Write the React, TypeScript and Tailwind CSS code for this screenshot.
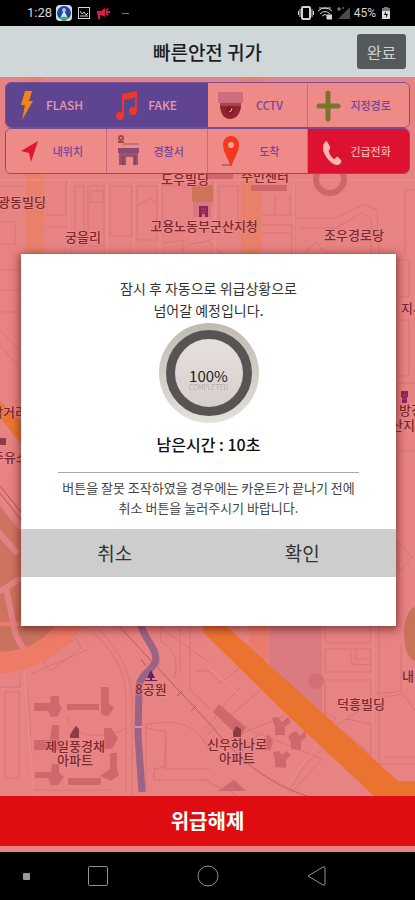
import type { ReactNode } from "react";

const FONT = "font-['Noto_Sans_CJK_KR','Noto_Sans',sans-serif]";

type Label = { x: number; y: number; text: string };

const labels: Label[] = [
  { x: 22, y: 207, text: "광동빌딩" },
  { x: 185, y: 184, text: "도우빌딩" },
  { x: 265, y: 181, text: "주민센터" },
  { x: 204, y: 231, text: "고용노동부군산지청" },
  { x: 83, y: 242, text: "궁을리" },
  { x: 354, y: 240, text: "조우경로당" },
  { x: 9, y: 417, text: "삼거리" },
  { x: 10, y: 462, text: "주유소" },
  { x: 413, y: 313, text: "지사" },
  { x: 411, y: 415, text: "방경" },
  { x: 409, y: 430, text: "산지청" },
  { x: 151, y: 694, text: "8공원" },
  { x: 75, y: 751, text: "제일풍경채" },
  { x: 75, y: 765, text: "아파트" },
  { x: 237, y: 749, text: "신우하나로" },
  { x: 237, y: 763, text: "아파트" },
  { x: 361, y: 709, text: "덕흥빌딩" },
  { x: 414, y: 681, text: "내흥" },
];

function MapCanvas() {
  return (
    <svg
      className="absolute inset-0 h-full w-full"
      viewBox="0 77 415 775"
      preserveAspectRatio="xMidYMid slice"
      aria-hidden="true"
    >
      <rect x="-400" y="77" width="1200" height="775" fill="#e78382" />
      {/* wide pale roads */}
      <path d="M26 77H44V254H26zM241 77H261V254H241z" fill="#e8806a" />
      <rect x="249" y="620" width="19" height="42" fill="#ea7c6b" />
      <path d="M269 626H322V737L269 684z" fill="#d97b80" />
      {/* block outlines */}
      <g fill="none" stroke="#d67477" strokeWidth="1">
        <path d="M-2 186H24M-2 222H15V244H-2M46 215H66V180M46 227H70V254M75 186H84V246H75zM91 191H103V202H91zM88 186H104V246H88zM110 186H132V236H110zM137 186H157V240H137zM137 206L150 198L157 204" />
        <path d="M162 186H190V180M162 186V228M213 180V205M219 186H238V228H219zM163 243L183 240V254M190 244L208 241L222 254" />
        <path d="M262 215H292M262 225H292V254M275 196V215M290 196V215M295 186V254M262 233H290M298 218H335L365 204L377 210L379 254M300 228H336L362 213L371 219V254M305 254L315 242L327 254M405 190H415M405 190V254" />
        <path d="M0 270H21M0 290H21M0 312H21M0 330L21 352M0 345L21 370M398 260H409V297H398M398 320H409V376H398M397 383H415M397 451H415M398 542L412 557L399 572z" />
        <path d="M43 662L76 638L81 648L51 671zM0 687H20V674M5 692H19V778H5zM31 674L87 650M85 627C108 642 126 668 126 700V792M96 627C118 646 132 674 132 700V796M27 690C31 720 31 760 34 796M34 790H110M68 715C65 737 105 741 126 728" />
        <path d="M160 627L161 642C177 648 178 667 174 678M180 627V673M190 627V690L210 709M195 671H210M210 663L160 627M210 780H154V769L164 767L166 732L146 728V724L170 722C191 724 202 735 210 751M166 737V769H210M146 724V792" />
        <path d="M205 667L221 683L239 668M214 719L220 708L258 735L242 751M205 728L216 718M221 708L240 688M209 747L284 716M258 733L322 759L290 794M288 794L304 765L328 745M205 780L224 790M236 796L226 786M268 684L205 737M249 660V677" />
        <path d="M325 626V643H371V626M325 649H371V672H325zM351 650V664L371 665M356 650V659H371M325 680H371V703L325 733zM325 685V713L336 718L325 728M347 719L371 724V762M343 730L371 755M379 626V764H415M376 693H386L401 691V644M379 698L403 694L415 711M384 757H415" />
      </g>
      <path d="M0 486L21 512M0 493L21 520" fill="none" stroke="#b0575d" strokeWidth="1" />
      <path
        d="M0 180H415M69 180V254M107 180V254M134 180V254M160 180V254M215 180V254M294 180V254M24 668L34 796M373 626V764M205 665L240 695M320 742L282 792"
        fill="none"
        stroke="#ea8989"
        strokeWidth="2"
      />
      {/* round junction and parks on the left edge */}
      <path d="M0 506L21 532V640H0z" fill="#cd7460" />
      <path d="M0 622H84C65 656 32 671 0 674z" fill="#ee7b65" />
      <path d="M0 626H55C40 644 20 651 0 652z" fill="#c97260" />
      <path
        d="M-2 532L18 554M21 578L6 588L-2 592M6 588L16 636L24 650"
        fill="none"
        stroke="#e58384"
        strokeWidth="6"
      />
      {/* orange trunk roads */}
      <path d="M0 401L24 424V447L0 418z" fill="#ea7530" />
      <path d="M203 622H222L398 781H415V796H374L283 711L203 632z" fill="#ea742f" />
      <ellipse cx="416" cy="634" rx="12" ry="27" fill="#c87359" />
      {/* stream */}
      <path
        d="M141 624C144 640 156 646 156 660C155 669 139 674 139 688L138 735L142 792"
        fill="none"
        stroke="#9b6385"
        strokeWidth="7"
      />
      <path d="M135 727H142" stroke="#eb8a8b" strokeWidth="2" />
      {/* railway */}
      <path d="M117 624L210 724C236 757 267 784 310 797" fill="none" stroke="#b85e62" strokeWidth="1" />
      <path d="M141 659L146 666M177 696L182 691M191 711L196 706" stroke="#a9585a" strokeWidth="1" />
      {/* buildings */}
      <g fill="#cf686c">
        <path d="M34 703H50L51 696H59V704L62 708L58 716L51 717L48 711H34zM67 704H99V710H67zM101 687H109V704L114 708L108 716L101 714zM34 740H50L52 725H59V750H34zM35 772H51L52 764H59V772L64 777L58 785L51 785L48 778H35zM68 778H101V785H68zM104 728H111L118 738L112 749H104zM110 753H117V770L119 775L111 781L100 776L110 769z" />
        <path d="M219 704L246 728L239 737L213 712zM272 718L278 717L282 722L288 717L291 722L285 727V735H275V727zM290 734L296 731L300 736L305 731L306 737L301 742V750L291 749V742L288 738zM273 752L279 751L282 755L287 751L291 755L286 760V768L275 767V761zM268 734L273 742L270 751L263 747zM234 780L246 791H218z" />
      </g>
      <circle cx="316" cy="681" r="8" fill="#d06f76" />
      <rect x="192" y="185" width="21" height="17" fill="#cd7358" />
      <rect x="193" y="202" width="18" height="15" fill="#d97681" />
      <g fill="none" stroke="#cf6669" strokeWidth="6">
        <circle cx="330" cy="179" r="14" />
        <path d="M251 188H287M207 176H233" />
      </g>
      {/* place symbols */}
      <g fill="#8c2554">
        <path d="M199 206H208V217H205V214H202V217H199z" />
        <path d="M401 391H408V397H407V403H402V397H401z" />
      </g>
      <path d="M201 209H206M201 212H206M402 395H407M402 399H407" stroke="#b04a6a" />
      <path d="M147 678L151 670L155 678H152V680H157V681H145V680H150V678z" fill="#652163" />
      <path d="M70 735L73 730L76 726L79 729V738H70zM233 732L236 726L241 729V737H233zM0 438H6V445H0z" fill="#903a41" />
      <g
        className={FONT}
        fill="#7b2831"
        fontSize="13"
        fontWeight="500"
        textAnchor="middle"
        stroke="#ed9290"
        strokeWidth="2"
        strokeOpacity="0.5"
        paintOrder="stroke"
      >
        {labels.map((l, i) => (
          <text key={i} x={l.x} y={l.y}>
            {l.text}
          </text>
        ))}
      </g>
    </svg>
  );
}

const icons: Record<string, ReactNode> = {
  bolt: (
    <svg viewBox="0 0 28 36" className="h-9 w-7">
      <path d="M11 4H18L15 14H19L8 33L11 18H7z" fill="#ef8512" />
    </svg>
  ),
  note: (
    <svg viewBox="0 0 28 36" className="h-9 w-7">
      <path d="M7 7L22 4V10L9 13V29H7zM20 5H22V25H20z" fill="#e83a2c" />
      <ellipse cx="5" cy="29" rx="4" ry="4" fill="#e83a2c" />
      <ellipse cx="18" cy="24" rx="4" ry="4" fill="#e83a2c" />
    </svg>
  ),
  cctv: (
    <svg viewBox="0 0 28 36" className="h-9 w-7">
      <path d="M2 5H27V16H2z" fill="#cc6e7e" />
      <path d="M4 16H25V20C24 27 20 32 14 32S5 27 4 20z" fill="#91252f" />
      <path d="M4 16H25V19H4z" fill="#b2404c" />
      <circle cx="14" cy="23" r="4" fill="#7c1c27" />
      <path d="M13 25Q16 25 16 21" stroke="#ecb0a8" fill="none" />
    </svg>
  ),
  plus: (
    <svg viewBox="0 0 28 36" className="h-9 w-7">
      <path d="M12 6V32M3 19H22" stroke="#7a752c" strokeWidth="5" strokeLinecap="round" />
    </svg>
  ),
  arrow: (
    <svg viewBox="0 0 28 36" className="h-9 w-7">
      <path d="M24 8L17 29L15 20L7 18z" fill="#dd1730" />
    </svg>
  ),
  police: (
    <svg viewBox="0 0 28 36" className="h-9 w-7">
      <circle cx="6" cy="5" r="2" fill="none" stroke="#9b4b45" strokeWidth="2" />
      <path d="M3 9H9" stroke="#9b4b45" strokeWidth="2" />
      <path d="M8 11H24" stroke="#c2727a" strokeWidth="2" />
      <path d="M3 15H24V20H3z" fill="#8c4a73" />
      <path d="M4 20H23V32H18V24H11V32H4z" fill="#9a5169" />
      <path d="M8 23V32M20 23V32" stroke="#7f496f" strokeWidth="2" />
    </svg>
  ),
  pin: (
    <svg viewBox="0 0 28 36" className="h-9 w-7">
      <path d="M6 32H15" stroke="#c1626b" strokeWidth="2" />
      <path
        d="M15 3C10 3 7 7 7 12C7 19 12 25 15 34C18 25 23 19 23 12C23 7 20 3 15 3z"
        fill="#f2391b"
      />
      <circle cx="15" cy="12" r="3" fill="#efa39b" />
    </svg>
  ),
  phone: (
    <svg viewBox="0 0 28 36" className="h-9 w-7">
      <path
        d="M9 9C10 8 11 8 12 10L14 14C15 16 12 17 13 19C14 22 16 25 18 26C20 26 20 23 22 24L25 27C26 28 25 31 22 32C16 33 7 22 7 15C7 12 8 10 9 9z"
        fill="#f7b8b2"
      />
    </svg>
  ),
};

function Tool({ icon, label, tone }: { icon: string; label: string; tone: "on" | "off" | "alert" }) {
  const tones = {
    on: "border-[#5f4491] bg-[#5f4491] pr-7 text-xs text-[#e69aa8]",
    off: "border-[#c76c80] bg-[#ee8b89] pr-4 text-[11px] text-[#75459a]",
    alert: "border-[#dc1230] bg-[#dc1230] pr-4 text-[11px] text-[#f5b3b0]",
  };
  return (
    <button type="button" className={`flex items-center border-r pl-2 last:border-r-0 ${tones[tone]}`}>
      <span className="w-8 shrink-0">{icons[icon]}</span>
      <span className="flex-1 text-center leading-4 font-medium whitespace-nowrap">{label}</span>
    </button>
  );
}

function StatusBar() {
  return (
    <div className="flex h-[26px] shrink-0 items-center justify-between bg-black pr-6 pl-[27px] text-[#d5d5d5]">
      <div className="flex items-center gap-1">
        <span className="font-[Roboto,sans-serif] text-[13px] leading-4">1:28</span>
        <svg viewBox="0 0 16 16" className="size-4">
          <rect width="16" height="16" rx="4" fill="#d8e1ee" />
          <circle cx="8" cy="8" r="7" fill="#2444a2" />
          <path d="M4 14L8 5L12 14z" fill="#d6eaf2" />
          <circle cx="8" cy="5" r="2" fill="#a8c3e8" />
          <path d="M4 13Q8 10 12 13L10 16H6z" fill="#45a866" />
        </svg>
        <svg viewBox="0 0 14 14" className="ml-px size-[14px]" fill="none" stroke="currentColor">
          <rect x="1.500" y="1.500" width="11" height="11" />
          <path d="M3 5L5 8L7 6L9 9L11 7M3 10H11" />
        </svg>
        <svg viewBox="0 0 14 14" className="ml-px size-[14px]" fill="#d91d47">
          <path d="M1 5L5 5L9 2V11L5 9H4V13H2V9L1 8zM10 3L13 2L11 5H14V7H11L13 10L10 9z" />
        </svg>
        <span className="ml-2 h-px w-[7px] bg-[#777]" />
      </div>
      <div className="flex items-center gap-1">
        <svg viewBox="0 0 16 14" className="h-[14px] w-4" fill="none" stroke="currentColor">
          <rect x="4" y="1" width="8" height="12" rx="1" strokeWidth="2" />
          <path d="M2 3V11M14 3V11M0.500 5V9M15.500 5V9" />
        </svg>
        <svg viewBox="0 0 14 14" className="size-[14px]" fill="none" stroke="currentColor">
          <path d="M0 5Q7 -1 14 5M2 8Q7 3 12 8M4 10Q7 7 10 10M1 2H13" />
          <path d="M9 9H14V13H9z" fill="currentColor" />
        </svg>
        <svg viewBox="0 0 14 14" className="size-[14px]">
          <path d="M14 1V13H2z" fill="#4b4b4b" />
          <path d="M1 3H5M3 1V5M6 2H8" stroke="#999" />
        </svg>
        <span className="font-[Roboto,sans-serif] text-xs leading-4">45%</span>
        <svg viewBox="0 0 10 14" className="ml-px h-[14px] w-[10px]">
          <path d="M3 1H7V2H9V13H1V2H3z" fill="#777" />
          <path d="M1 5H9V13H1z" fill="#ddd" />
          <path d="M5 5L3 9H5V12L7 8H5z" fill="#111" />
        </svg>
      </div>
    </div>
  );
}

function CountdownDialog() {
  return (
    <section
      role="dialog"
      aria-label="위급상황"
      className="mr-[19px] ml-[21px] flex flex-col bg-white pt-[23px] pb-[49px] text-center text-[#333] shadow-[0_2px_8px_2px_rgba(90,20,20,0.6)]"
    >
      <p className="text-[14px] leading-[22px]">
        잠시 후 자동으로 위급상황으로
        <br />
        넘어갈 예정입니다.
      </p>
      <div className="mx-auto mt-[2px] flex size-[100px] rounded-full bg-linear-to-b from-[#bfbbb0] to-[#e4e0da] p-[7px]">
        <div className="flex flex-1 flex-col items-center justify-center rounded-full border-[9px] border-[#595452] bg-linear-to-b from-[#e5dfde] to-[#d7cfcc] pt-[11px]">
          <span className="text-[15px] leading-4 text-[#222]">100%</span>
          <span className="text-[7px] leading-[6px] font-light text-[#a09a97]">COMPLETED</span>
        </div>
      </div>
      <p className="mt-[9px] text-[16px] leading-6 font-medium text-[#111]">남은시간 : 10초</p>
      <hr className="mx-[37px] mt-4 border-[#aaa]" />
      <p className="mt-[5px] text-[13px] leading-5 text-[#444]">
        버튼을 잘못 조작하였을 경우에는 카운트가 끝나기 전에
        <br />
        취소 버튼을 눌러주시기 바랍니다.
      </p>
      <div className="mt-[11px] grid h-12 grid-cols-2 bg-[#cdcdcd] text-[19px] text-[#333]">
        <button type="button">취소</button>
        <button type="button">확인</button>
      </div>
    </section>
  );
}

export default function App() {
  return (
    <div className={`flex min-h-screen flex-col ${FONT}`}>
      <StatusBar />
      <header className="grid h-[51px] shrink-0 grid-cols-[1fr_auto_1fr] items-center bg-[#d0d7d9] px-[9px]">
        <h1 className="col-start-2 text-[19px] leading-7 font-medium text-[#1b1d1e]">
          빠른안전 귀가
        </h1>
        <button
          type="button"
          className="h-[35px] w-[49px] justify-self-end rounded-[3px] bg-[#54595b] text-[16px] leading-6 text-[#cbd0d1]"
        >
          완료
        </button>
      </header>
      <main className="relative isolate flex flex-1 flex-col overflow-hidden">
        <MapCanvas />
        <div className="relative flex flex-1 flex-col">
          <nav className="mx-[5px] mt-[5px] flex flex-col">
            <div className="grid h-[46px] grid-cols-4 overflow-hidden rounded-md border border-[#74509c]">
              <Tool icon="bolt" label="FLASH" tone="on" />
              <Tool icon="note" label="FAKE" tone="on" />
              <Tool icon="cctv" label="CCTV" tone="off" />
              <Tool icon="plus" label="지정경로" tone="off" />
            </div>
            <div className="grid h-[46px] grid-cols-4 overflow-hidden rounded-md border border-[#74509c]">
              <Tool icon="arrow" label="내위치" tone="off" />
              <Tool icon="police" label="경찰서" tone="off" />
              <Tool icon="pin" label="도착" tone="off" />
              <Tool icon="phone" label="긴급전화" tone="alert" />
            </div>
          </nav>
          <div className="mt-20 mb-auto">
            <CountdownDialog />
          </div>
          <button
            type="button"
            className="mb-[6px] h-[50px] bg-[#df0d12] text-[20px] leading-7 font-bold text-white"
          >
            위급해제
          </button>
        </div>
      </main>
      <footer className="flex h-12 shrink-0 items-center bg-black pl-[23px] text-[#929292]">
        <span className="size-[7px] rounded-[1px] bg-[#999]" />
        <div className="flex flex-1 items-center justify-between pr-[87px] pl-[57px]">
          <button type="button" aria-label="최근 앱">
            <svg viewBox="0 0 22 22" className="size-[22px]" fill="none" stroke="currentColor">
              <rect x="1.500" y="1.500" width="19" height="19" rx="1" />
            </svg>
          </button>
          <button type="button" aria-label="홈">
            <svg viewBox="0 0 22 22" className="size-[22px]" fill="none" stroke="currentColor">
              <circle cx="11" cy="11" r="10" />
            </svg>
          </button>
          <button type="button" aria-label="뒤로">
            <svg viewBox="0 0 22 22" className="size-[22px]" fill="none" stroke="currentColor">
              <path d="M2 11L17 2Q19 1 19 3V19Q19 21 17 20z" />
            </svg>
          </button>
        </div>
      </footer>
    </div>
  );
}
